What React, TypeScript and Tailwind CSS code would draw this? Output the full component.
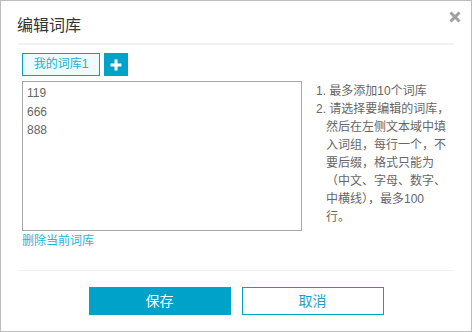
export default function App() {
  const font = { fontFamily: '"Liberation Sans", "Noto Sans CJK SC", sans-serif' };
  return (
    <div
      className="relative w-[472px] h-[332px] border border-[#bdbdbd] bg-white text-[#666]"
      style={font}
    >
      <div className="px-[16px] pt-[13px] text-[16px] leading-[24px] text-[#333]">编辑词库</div>
      <button className="absolute right-[10px] top-[10px] w-[12px] h-[12px]" aria-label="close">
        <svg viewBox="0 0 12 12" className="w-[12px] h-[12px]">
          <path d="M1.5 1.5 L10.5 10.5 M10.5 1.5 L1.5 10.5" stroke="#a0a0a0" strokeWidth="3" />
        </svg>
      </button>
      <div className="mx-[17px] mt-[5px] h-[2px] bg-[#f2f2f2]" />

      <div className="px-[21px] pt-[8px] flex">
        <div className="w-[280px]">
          <div className="flex gap-[4px] h-[23px]">
            <div className="w-[78px] h-[23px] border border-[#00a2ca] bg-[#eefcff] text-[#20b0d4] text-[12px] leading-[21px] text-center">
              我的词库1
            </div>
            <button className="w-[24px] h-[23px] bg-[#00a2ca] flex items-center justify-center">
              <svg viewBox="0 0 12 12" className="w-[12px] h-[12px]">
                <path d="M6 0.5 V11.5 M0.5 6 H11.5" stroke="#fff" strokeWidth="3" />
              </svg>
            </button>
          </div>
          <textarea
            className="mt-[5px] block w-[280px] h-[150px] border border-[#a9a9a9] px-[4px] pt-[2px] text-[12px] leading-[18.5px] text-[#666] resize-none outline-none"
            style={font}
            defaultValue={"119\n666\n888"}
          />
          <div className="mt-[2px] text-[12px] leading-[16px] text-[#1fb5dc]">删除当前词库</div>
        </div>
        <div className="ml-[14px] pt-[29px] text-[12px] leading-[18px] text-[#666]">
          <div>1. 最多添加10个词库</div>
          <div>2. 请选择要编辑的词库，</div>
          <div className="pl-[10px]">
            <div>然后在左侧文本域中填</div>
            <div>入词组，每行一个，不</div>
            <div>要后缀，格式只能为</div>
            <div>（中文、字母、数字、</div>
            <div>中横线），最多100</div>
            <div>行。</div>
          </div>
        </div>
      </div>

      <div className="mx-[17px] mt-[21px] h-[1px] bg-[#f0f0f0]" />
      <div className="flex justify-center gap-[11px] mt-[16px]">
        <button className="w-[142px] h-[28px] bg-[#00a2ca] text-white text-[14px]">保存</button>
        <button className="w-[142px] h-[28px] border border-[#00a2ca] text-[#1a9fc4] text-[14px]">取消</button>
      </div>
    </div>
  );
}
